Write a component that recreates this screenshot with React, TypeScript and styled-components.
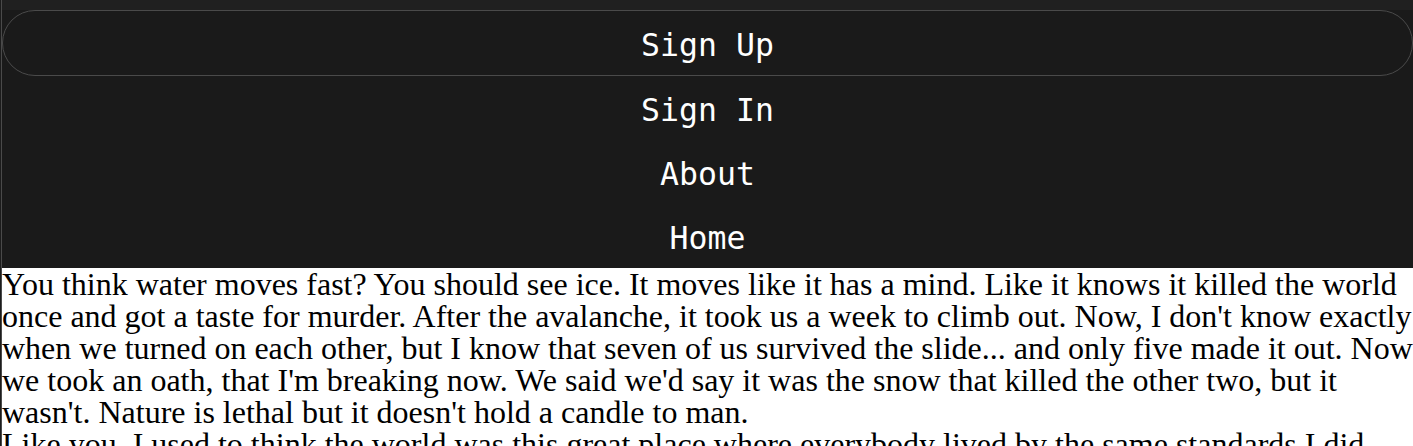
import React from 'react'
import styled, { createGlobalStyle } from 'styled-components'

const GlobalStyle = createGlobalStyle`
  html, body {
    margin: 0;
    padding: 0;
    background: #ffffff;
  }
`

const links = [
  { label: 'Sign Up', outlined: true },
  { label: 'Sign In' },
  { label: 'About' },
  { label: 'Home' },
]

const paragraphs = [
  "You think water moves fast? You should see ice. It moves like it has a mind. Like it knows it killed the world once and got a taste for murder. After the avalanche, it took us a week to climb out. Now, I don't know exactly when we turned on each other, but I know that seven of us survived the slide... and only five made it out. Now we took an oath, that I'm breaking now. We said we'd say it was the snow that killed the other two, but it wasn't. Nature is lethal but it doesn't hold a candle to man.",
  "Like you, I used to think the world was this great place where everybody lived by the same standards I did, then some kid with a nail showed me I was living in his world, a world where chaos rules not order, a world where righteousness is not rewarded.",
]

const App: React.FC = () => (
  <Page>
    <GlobalStyle />
    <Rail>
      <Header>
        <NavList>
          {links.map((link) => (
            <NavItem key={link.label} outlined={link.outlined}>
              {link.label}
            </NavItem>
          ))}
        </NavList>
      </Header>
      <Article>
        {paragraphs.map((text, i) => (
          <Paragraph key={i}>{text}</Paragraph>
        ))}
      </Article>
    </Rail>
  </Page>
)

export default App

const Page = styled.div`
  min-height: 100vh;
  border-left: 1px solid #1c1c1c;
`

const Rail = styled.div`
  min-height: 100vh;
  border-left: 1px solid #4a4a4a;
`

const Header = styled.header`
  background: #202020;
  padding-top: 10px;
`

const NavList = styled.nav`
  display: flex;
  flex-direction: column;
  background: #1a1a1a;
`

const NavItem = styled.a.withConfig({ shouldForwardProp: (p) => p !== 'outlined' })<{ outlined?: boolean }>`
  display: flex;
  align-items: center;
  justify-content: center;
  box-sizing: border-box;
  height: ${(p) => (p.outlined ? '66px' : '64px')};
  padding-top: 3px;
  border: 1.5px solid ${(p) => (p.outlined ? '#4a4a4a' : 'transparent')};
  border-radius: 999px;
  color: #ffffff;
  font-family: 'DejaVu Sans Mono', 'Liberation Mono', monospace;
  font-size: 31.5px;
  text-decoration: none;
  cursor: pointer;
`

const Article = styled.main`
  color: #000000;
  font-family: 'Liberation Serif', 'Times New Roman', serif;
  font-size: 32px;
  line-height: 32px;
`

const Paragraph = styled.div`
  margin: 0;
`
